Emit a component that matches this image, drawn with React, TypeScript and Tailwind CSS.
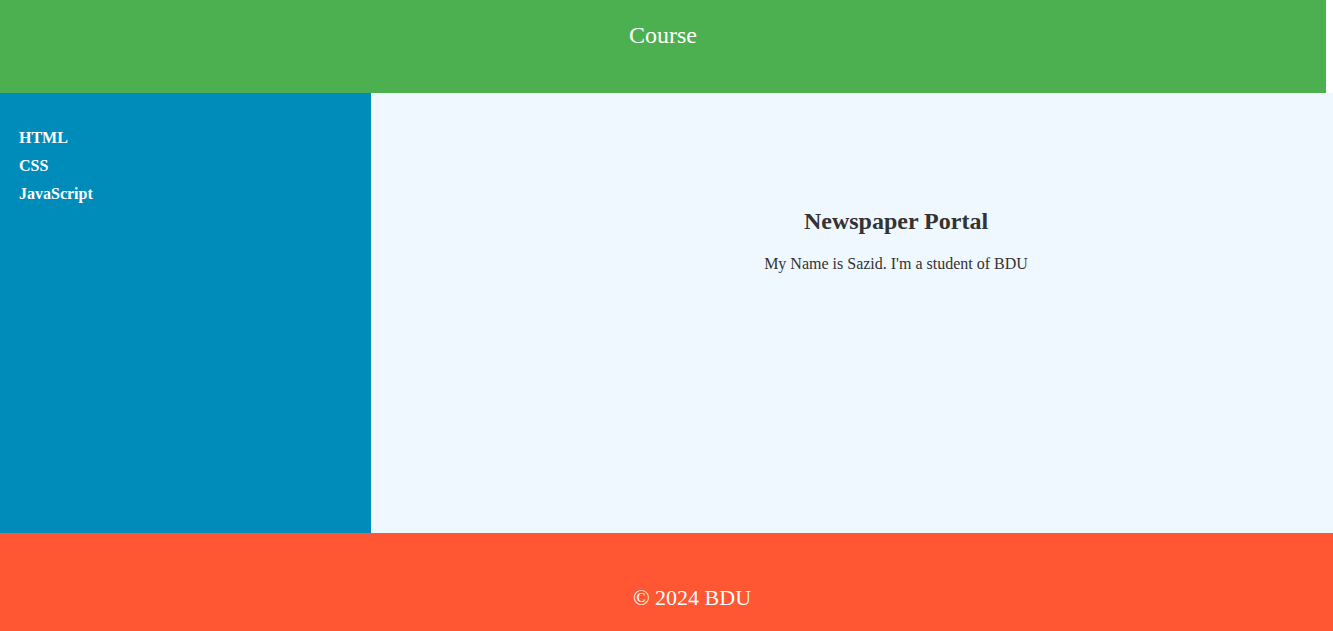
import React from 'react';

const links = ['HTML', 'CSS', 'JavaScript'];

const App: React.FC = () => {
    return (
        <div className="flex min-h-[631px] flex-col bg-white font-['Liberation_Serif',serif]">
            <header className="flex h-[93px] w-[1326px] justify-center bg-[#4CAF50] pt-[21px] text-white">
                <h1 className="text-[24px] leading-[28px] font-normal">Course</h1>
            </header>
            <div className="flex h-[440px]">
                <aside className="w-[371px] bg-[#008CBA] px-[19px] pt-[36px] text-white">
                    <ul className="flex flex-col gap-[10px]">
                        {links.map((link) => (
                            <li key={link} className="text-[16px] leading-[18px] font-bold">
                                {link}
                            </li>
                        ))}
                    </ul>
                </aside>
                <main className="flex-1 bg-[#F0F8FF] pt-[114px] pl-[88px] text-center text-[#333]">
                    <h2 className="mb-[20px] text-[24px] leading-[28px] font-bold">Newspaper Portal</h2>
                    <p className="text-[16px] leading-[18px]">My Name is Sazid. I'm a student of BDU</p>
                </main>
            </div>
            <footer className="flex h-[98px] justify-center bg-[#FF5733] pt-[52px] pl-[51px] text-white">
                <p className="text-[22px] leading-[26px]">© 2024 BDU</p>
            </footer>
        </div>
    );
};

export default App;
